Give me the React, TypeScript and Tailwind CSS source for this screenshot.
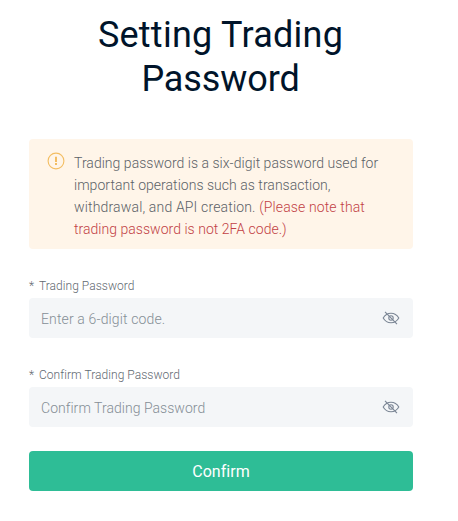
import React, { useState } from 'react';

const EyeOffIcon = () => (
  <svg className="w-[18px] h-4" viewBox="0 0 18 16" fill="none" stroke="currentColor" strokeWidth="1.1">
    <path d="M1.2 8C3 4.9 5.8 3.2 9 3.2s6 1.7 7.8 4.8c-1.8 3.1-4.6 4.8-7.8 4.8S3 11.1 1.2 8z" />
    <circle cx="9" cy="8" r="2.2" />
    <path d="M3 1.8l12 12.4" />
  </svg>
);

const WarningIcon = () => (
  <svg className="w-[18px] h-[18px] shrink-0" viewBox="0 0 18 18" fill="none" stroke="currentColor">
    <circle cx="9" cy="9" r="7.9" strokeWidth="1.1" />
    <path d="M9 4.8v5.1" strokeWidth="2" />
    <path d="M9 11.1v2" strokeWidth="2" />
  </svg>
);

type PasswordFieldProps = {
  id: string;
  label: string;
  placeholder: string;
  inputClassName: string;
};

function PasswordField({ id, label, placeholder, inputClassName }: PasswordFieldProps) {
  const [value, setValue] = useState('');
  const [visible, setVisible] = useState(false);

  return (
    <div>
      <label htmlFor={id} className="flex h-6 items-center text-xs font-light text-[#5f6971]">
        <span className="w-2.5">*</span>
        <span className="tracking-[0.04px]">{label}</span>
      </label>
      <div className="flex h-10 items-center rounded bg-[#f4f6f8] pl-3 pr-[13px]">
        <input
          id={id}
          type={visible ? 'text' : 'password'}
          value={value}
          maxLength={6}
          placeholder={placeholder}
          onChange={(e) => setValue(e.target.value)}
          className={`min-w-0 flex-1 bg-transparent pt-0.5 text-sm font-light text-[#00142a] outline-none placeholder:text-[#858e96] ${inputClassName}`}
        />
        <button type="button" onClick={() => setVisible(!visible)} className="text-[#7a8594]">
          <EyeOffIcon />
        </button>
      </div>
    </div>
  );
}

export default function App() {
  return (
    <div className="min-h-[521px] bg-white pl-[29px] pt-[13px] font-['Roboto',sans-serif]">
      <div className="w-96">
        <h1 className="pr-px text-center text-[36px] leading-[44px] font-normal text-[#00142a]">
          <span className="tracking-[0.25px]">Setting Trading</span>
          <br />
          <span className="tracking-[-0.1px]">Password</span>
        </h1>

        {/* Notice */}
        <div className="mt-[38px] flex h-[110px] rounded bg-[#fff5e9] pl-[18px] pt-[13px] text-[#f3bd62]">
          <WarningIcon />
          <p className="ml-[9px] whitespace-nowrap text-sm leading-[22px] font-light text-[#5c6267]">
            <span className="tracking-[0.03px]">Trading password is a six-digit password used for</span>
            <br />
            <span className="tracking-[0.03px]">important operations such as transaction,</span>
            <br />
            <span className="tracking-[0.16px]">withdrawal, and API creation. </span>
            <span className="tracking-[0.13px] text-[#c23f45]">(Please note that</span>
            <br />
            <span className="tracking-[0.03px] text-[#c23f45]">trading password is not 2FA code.)</span>
          </p>
        </div>

        <form className="mt-[25px]" onSubmit={(e) => e.preventDefault()}>
          <div className="space-y-[25px]">
            <PasswordField
              id="password"
              label="Trading Password"
              placeholder="Enter a 6-digit code."
              inputClassName="tracking-[0.14px]"
            />
            <PasswordField
              id="confirm"
              label="Confirm Trading Password"
              placeholder="Confirm Trading Password"
              inputClassName="tracking-[0.04px]"
            />
          </div>
          <button
            type="submit"
            className="mt-6 h-10 w-full rounded bg-[#2ebd96] pt-0.5 text-base tracking-[0.05px] text-white"
          >
            Confirm
          </button>
        </form>
      </div>
    </div>
  );
}
